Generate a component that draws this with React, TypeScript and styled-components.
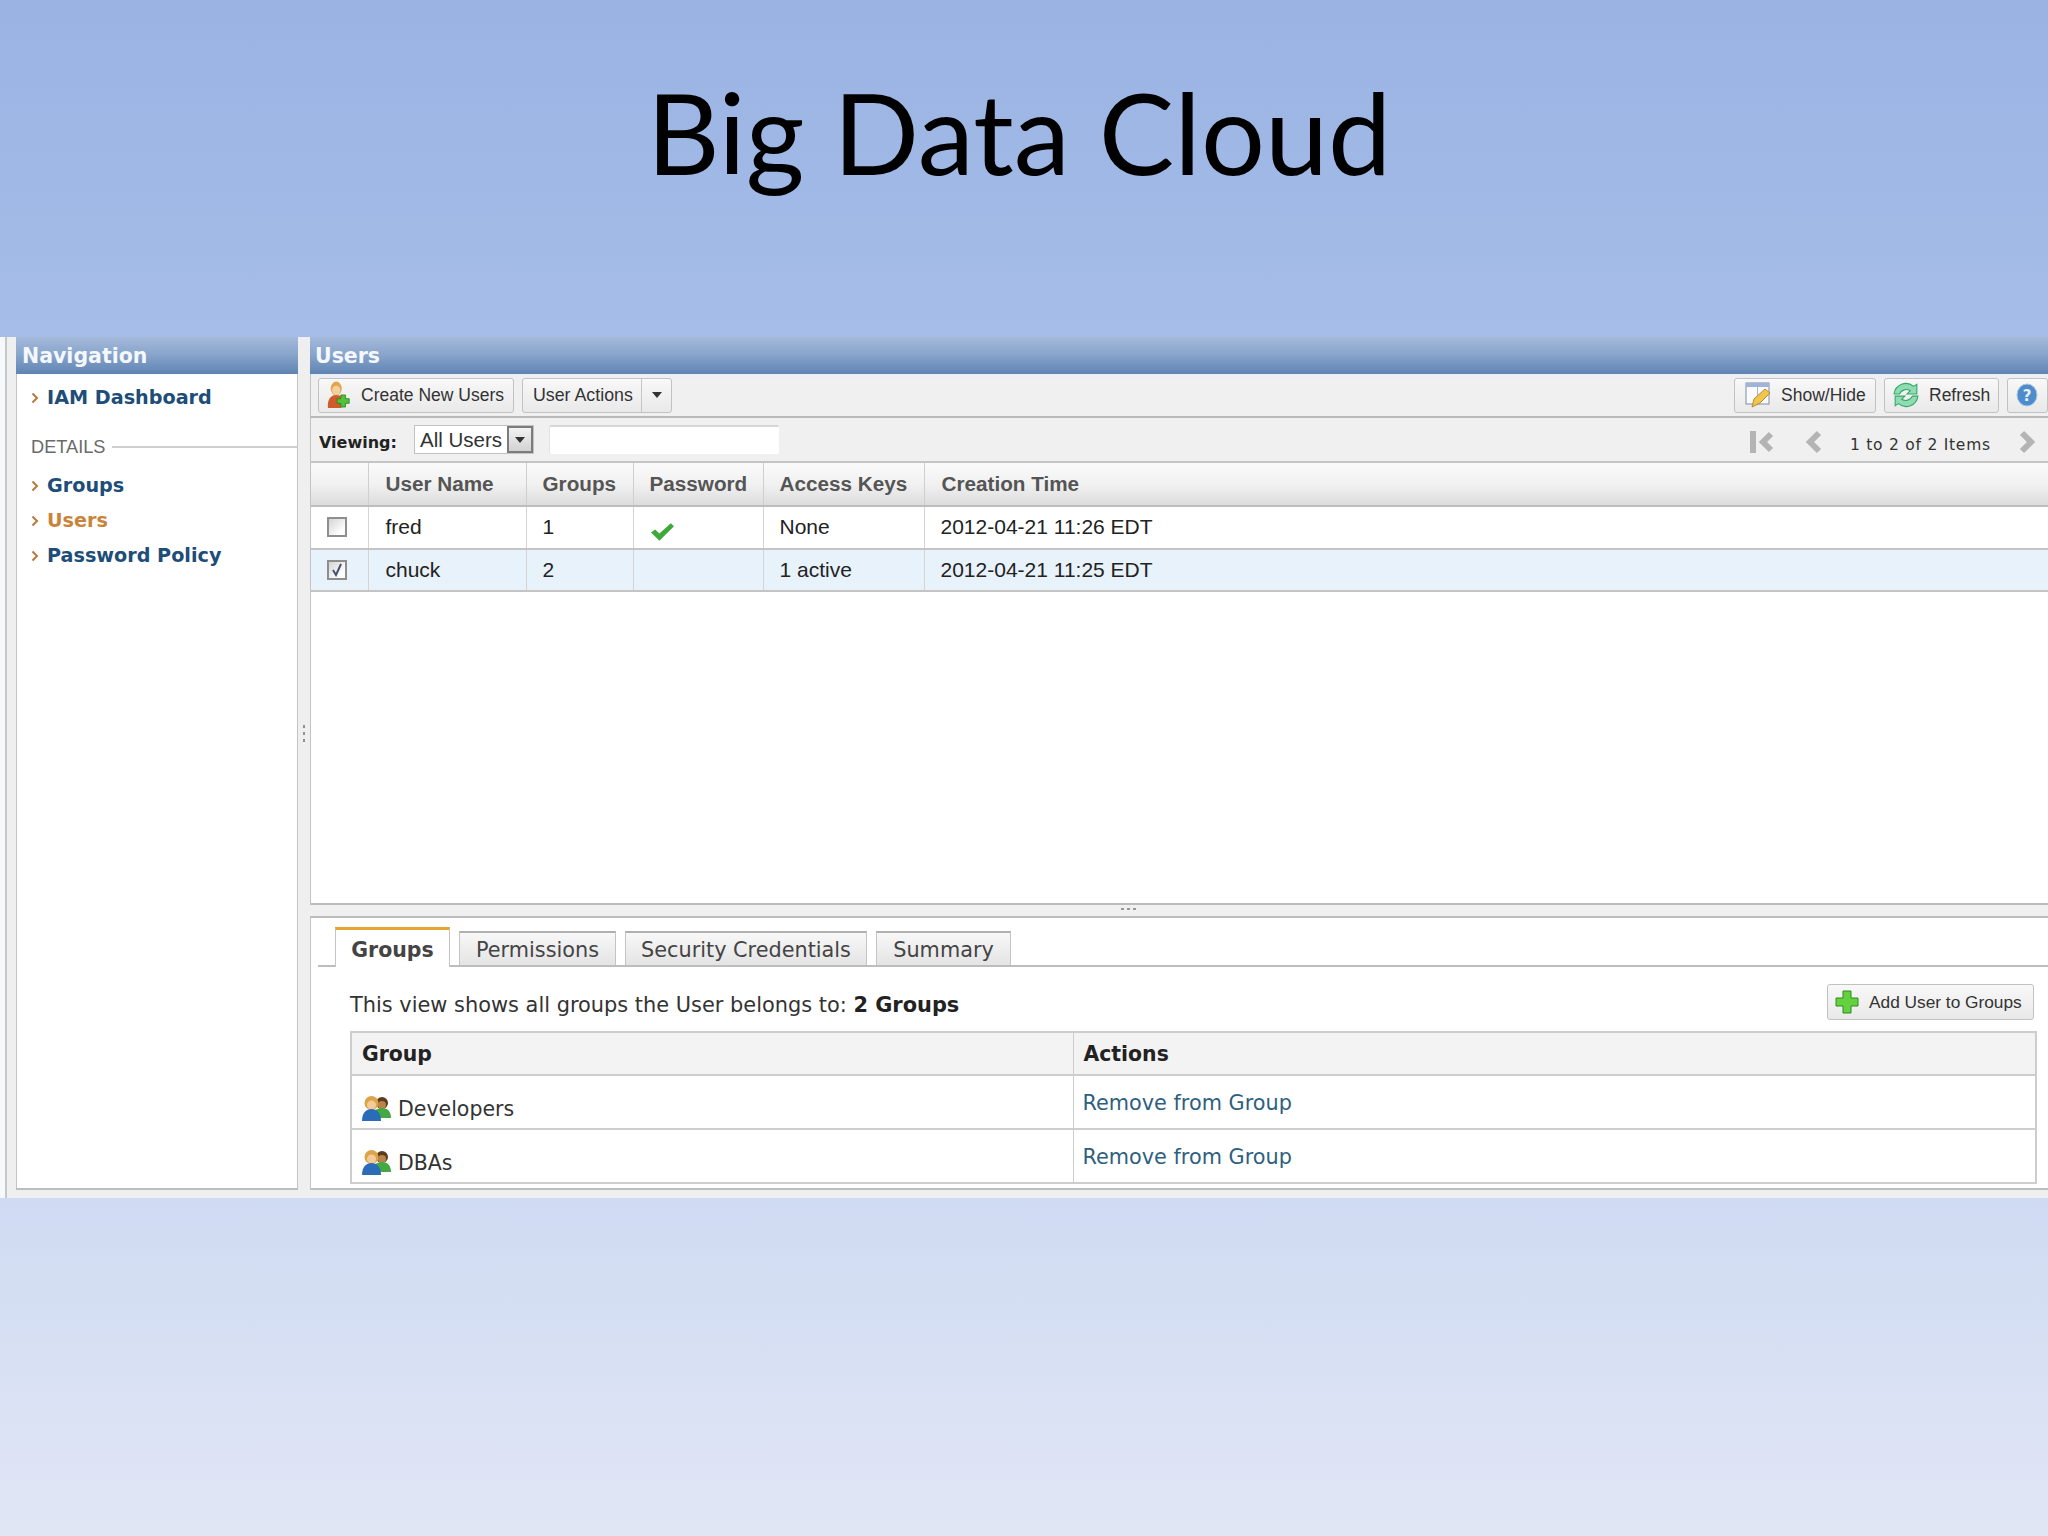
import React from "react";
import styled, { createGlobalStyle } from "styled-components";

const Global = createGlobalStyle`
  html, body { margin: 0; padding: 0; }
  body {
    width: 2048px;
    height: 1536px;
    overflow: hidden;
    background: linear-gradient(180deg, #9ab3e3 0px, #a6bde8 337px, #cfdbf2 1198px, #e1e6f5 1536px);
    font-family: "Liberation Sans", Arial, sans-serif;
  }
`;

const Page = styled.div`
  display: flex;
  flex-direction: column;
  width: 2048px;
  height: 1536px;
`;
const TitleBar = styled.header`
  height: 337px;
  flex: none;
  display: flex;
  justify-content: center;
`;
const Title = styled.h1`
  margin: 67px 0 0 -10px;
  font: 400 113px/128px Lato, "Open Sans", sans-serif;
  color: #000;
  letter-spacing: 0;
`;
const Shot = styled.div`
  height: 861px;
  flex: none;
  display: flex;
  box-sizing: border-box;
  padding-bottom: 8px;
  background: #efefef;
`;
const LeftEdge = styled.div`
  width: 16px;
  flex: none;
  margin-bottom: -8px;
  background: linear-gradient(90deg, #f7f8fc 5px, #c6c6cc 5px, #c6c6cc 7px, #efefef 7px);
`;
const Panel = styled.aside`
  width: 282px;
  flex: none;
  display: flex;
  flex-direction: column;
  background: #fff;
  border-bottom: 2px solid #bdbdbd;
`;
const PanelBody = styled.nav`
  flex: 1;
  border-left: 1px solid #c4c4c4;
  border-right: 1px solid #c4c4c4;
  padding: 0 0 0 14px;
`;
const HeaderBar = styled.div`
  height: 37px;
  flex: none;
  box-sizing: border-box;
  padding: 0 0 0 6px;
  display: flex;
  align-items: center;
  background: linear-gradient(180deg, #a3b9db 0%, #8aa6cc 45%, #5f84b3 100%);
  color: #f4f7fb;
  font: 700 20.5px "DejaVu Sans", Verdana, sans-serif;
`;
const MainHeader = styled(HeaderBar)`
  padding-left: 5px;
`;
const NavItem = styled.a<{ $active?: boolean }>`
  display: flex;
  align-items: center;
  gap: 8px;
  height: 35px;
  font: 700 19.2px "DejaVu Sans", Verdana, sans-serif;
  color: ${(p) => (p.$active ? "#c8853a" : "#1d4d78")};
`;
const TopNavItem = styled(NavItem)`
  margin: 6px 0 0 0;
`;
const SectionLabel = styled.div`
  display: flex;
  align-items: center;
  gap: 7px;
  margin: 20px 0 9px 0;
  height: 24px;
  font: 400 18.2px "Liberation Sans", Arial, sans-serif;
  color: #6a6a6a;
  &::after {
    content: "";
    flex: 1;
    height: 2px;
    background: #cfcfcf;
  }
`;
const Gutter = styled.div`
  width: 12px;
  flex: none;
  display: flex;
  flex-direction: column;
  align-items: center;
  justify-content: center;
  gap: 4px;
  padding-bottom: 60px;
`;
const GripDot = styled.i`
  width: 2px;
  height: 3px;
  background: #8f8f8f;
`;
const Main = styled.main`
  flex: 1;
  min-width: 0;
  display: flex;
  flex-direction: column;
`;
const Toolbar = styled.div`
  height: 44px;
  flex: none;
  box-sizing: border-box;
  display: flex;
  align-items: center;
  justify-content: space-between;
  padding: 0 0 0 7px;
  background: linear-gradient(180deg, #ebeef8 0, #f0f0f0 5px);
  border-bottom: 2px solid #b9b9b9;
  border-left: 1px solid #c4c4c4;
  overflow: hidden;
`;
const ToolGroup = styled.div`
  display: flex;
  gap: 8px;
  flex: none;
`;
const ToolButton = styled.button<{ $w: number; $pad?: number }>`
  width: ${(p) => p.$w}px;
  height: 35px;
  flex: none;
  box-sizing: border-box;
  display: flex;
  align-items: center;
  gap: 10px;
  padding: 0 0 0 ${(p) => p.$pad ?? 8}px;
  border: 1px solid #c2c2c2;
  border-radius: 3px;
  background: linear-gradient(180deg, #f8f8f8 0%, #e9e9e9 100%);
  font: 400 17.5px "Liberation Sans", Arial, sans-serif;
  color: #333;
  white-space: nowrap;
`;
const SplitButton = styled.div`
  width: 150px;
  height: 35px;
  box-sizing: border-box;
  display: flex;
  flex: none;
  border: 1px solid #c2c2c2;
  border-radius: 3px;
  background: linear-gradient(180deg, #f8f8f8 0%, #e9e9e9 100%);
  font: 400 17.8px "Liberation Sans", Arial, sans-serif;
  color: #333;
`;
const SplitLabel = styled.span`
  width: 119px;
  padding-left: 10px;
  box-sizing: border-box;
  display: flex;
  align-items: center;
  border-right: 1px solid #c6c6c6;
  white-space: nowrap;
`;
const SplitArrow = styled.span`
  flex: 1;
  display: flex;
  align-items: center;
  justify-content: center;
`;
const DownTri = styled.i`
  width: 0;
  height: 0;
  border-left: 5px solid transparent;
  border-right: 5px solid transparent;
  border-top: 6px solid #333;
`;
const FilterBar = styled.div`
  height: 45px;
  flex: none;
  box-sizing: border-box;
  display: flex;
  align-items: center;
  padding: 0 0 0 8px;
  background: #f0f0f0;
  border-bottom: 2px solid #c4c4c4;
  border-left: 1px solid #c4c4c4;
`;
const ViewingLabel = styled.label`
  width: 95px;
  padding-top: 5px;
  font: 700 16px "DejaVu Sans", Verdana, sans-serif;
  color: #222;
`;
const SelectBox = styled.div`
  width: 120px;
  height: 29px;
  box-sizing: border-box;
  display: flex;
  border: 1px solid #c2c2c2;
  background: #fff;
  font: 400 20.5px "Liberation Sans", Arial, sans-serif;
  color: #333;
`;
const SelectText = styled.span`
  flex: 1;
  padding-left: 5px;
  line-height: 28px;
`;
const SelectArrow = styled.span`
  width: 26px;
  display: flex;
  align-items: center;
  justify-content: center;
  border: 2px solid #7c7c7c;
  box-sizing: border-box;
  background: linear-gradient(180deg, #f2f2f2, #d2d2d2);
`;
const SearchInput = styled.div`
  width: 230px;
  height: 29px;
  margin-left: 15px;
  box-sizing: border-box;
  background: #fff;
  border-top: 2px solid #d6d6d6;
  border-left: 1px solid #e4e4e4;
  border-radius: 2px;
`;
const Pager = styled.div`
  margin-left: auto;
  display: flex;
  align-items: center;
  padding: 5px 12px 0 0;
`;
const PagerText = styled.span`
  width: 197px;
  padding: 6px 0 0 28px;
  box-sizing: border-box;
  font: 400 15.5px "DejaVu Sans", Verdana, sans-serif;
  letter-spacing: 0.75px;
  color: #333;
  white-space: nowrap;
`;
const PagerIconGap = styled.span`
  width: 31px;
`;
const GridArea = styled.div`
  flex: 1;
  min-height: 0;
  background: #fff;
  border-left: 1px solid #c4c4c4;
  border-bottom: 2px solid #bcbcbc;
`;
const Grid = styled.table`
  width: 100%;
  table-layout: fixed;
  border-collapse: collapse;
  font: 400 21px "Liberation Sans", Arial, sans-serif;
  color: #222;
`;
const GridHead = styled.th<{ $w?: number }>`
  ${(p) => (p.$w ? `width: ${p.$w}px;` : "")}
  height: 43px;
  box-sizing: border-box;
  padding: 0 0 0 16px;
  text-align: left;
  font: 700 20.7px "Liberation Sans", Arial, sans-serif;
  color: #555;
  background: linear-gradient(180deg, #fafafa 0%, #f1f1f1 50%, #dcdcdc 100%);
  border-right: 1px solid #cfcfcf;
  border-bottom: 2px solid #bdbdbd;
  &:nth-child(2) { padding-left: 17px; }
  &:last-child { border-right: none; padding-left: 17px; }
`;
const GridRow = styled.tr<{ $selected?: boolean }>`
  background: ${(p) => (p.$selected ? "#e8f2fb" : "#fff")};
`;
const GridCell = styled.td`
  height: 42.5px;
  box-sizing: border-box;
  padding: 0 0 0 16px;
  border-right: 1px solid #d4d4d4;
  border-bottom: 2px solid #c4c4c4;
  &:nth-child(2) { padding-left: 17px; }
  &:last-child { border-right: none; }
`;
const CheckCell = styled(GridCell)`
  padding-left: 16px;
`;
const CheckBox = styled.span<{ $checked?: boolean }>`
  display: flex;
  align-items: center;
  justify-content: center;
  width: 20px;
  height: 20px;
  box-sizing: border-box;
  border: 2px solid #8e8e8e;
  background: linear-gradient(135deg, #d4d4d4, #fdfdfd 75%);
`;
const CheckHolder = styled.span`
  display: block;
  height: 20px;
  margin: 9px 0 0 0;
`;
const Splitter = styled.div`
  height: 11px;
  flex: none;
  background: #f0f0f0;
  display: flex;
  justify-content: center;
  align-items: center;
  gap: 3px;
  padding: 0 102px 3px 0;
  box-sizing: border-box;
`;
const HGripDot = styled.i`
  width: 3px;
  height: 2px;
  background: #999;
`;
const Lower = styled.section`
  height: 274px;
  flex: none;
  box-sizing: border-box;
  display: flex;
  flex-direction: column;
  background: #fff;
  border-top: 2px solid #bcbcbc;
  border-left: 1px solid #c4c4c4;
  border-bottom: 2px solid #bdbdbd;
`;
const TabStrip = styled.div`
  height: 49px;
  flex: none;
  margin-left: 7px;
  padding-left: 17px;
  display: flex;
  align-items: flex-end;
  gap: 9px;
  box-sizing: border-box;
  border-bottom: 2px solid #bdbdbd;
`;
const Tab = styled.div<{ $w: number; $active?: boolean }>`
  width: ${(p) => p.$w}px;
  height: ${(p) => (p.$active ? 40 : 34)}px;
  box-sizing: border-box;
  margin-bottom: ${(p) => (p.$active ? -2 : 0)}px;
  display: flex;
  align-items: center;
  justify-content: center;
  padding-top: ${(p) => (p.$active ? 3 : 2)}px;
  font: ${(p) => (p.$active ? "700 20.5px" : "400 20.8px")} "DejaVu Sans", Verdana, sans-serif;
  color: #444;
  border: 1px solid #c4c4c4;
  border-bottom: none;
  border-top: ${(p) => (p.$active ? "3px solid #e5a331" : "2px solid #b0b0b0")};
  background: ${(p) => (p.$active ? "#fff" : "linear-gradient(180deg, #f8f8f8 0%, #e4e4e4 100%)")};
  white-space: nowrap;
`;
const InfoRow = styled.div`
  height: 64px;
  flex: none;
  box-sizing: border-box;
  padding: 6px 14px 0 39px;
  display: flex;
  align-items: center;
  justify-content: space-between;
`;
const InfoText = styled.p`
  margin: 0;
  padding-top: 6px;
  font: 400 20.9px "DejaVu Sans", Verdana, sans-serif;
  color: #333;
  b { color: #222; }
`;
const AddButton = styled(ToolButton)`
  height: 36px;
  gap: 10px;
  font-size: 17.3px;
`;
const GroupTable = styled.table`
  width: calc(100% - 50px);
  margin-left: 39px;
  table-layout: fixed;
  border-collapse: collapse;
  border: 2px solid #cdcdcd;
  font: 400 20.5px "DejaVu Sans", Verdana, sans-serif;
  color: #333;
`;
const GroupHead = styled.th<{ $w?: number }>`
  ${(p) => (p.$w ? `width: ${p.$w}px;` : "")}
  height: 43px;
  box-sizing: border-box;
  padding: 0 0 0 10px;
  text-align: left;
  background: #f3f3f3;
  font: 700 20.4px "DejaVu Sans", Verdana, sans-serif;
  color: #222;
  border-right: 1px solid #cdcdcd;
  border-bottom: 2px solid #cdcdcd;
`;
const GroupCell = styled.td`
  height: 54px;
  box-sizing: border-box;
  padding: 0 0 7px 10px;
  vertical-align: bottom;
  border-right: 1px solid #cdcdcd;
  border-bottom: 2px solid #cdcdcd;
`;
const GroupName = styled.span`
  display: flex;
  align-items: center;
  gap: 7px;
`;
const ActionCell = styled.td`
  padding: 1px 0 0 9px;
  border-bottom: 2px solid #cdcdcd;
  font-size: 20.8px;
`;
const ActionLink = styled.a`
  color: #2f5f80;
`;

const Chevron = () => (
  <svg width="8" height="12" viewBox="0 0 8 12">
    <path d="M1.5 1.5 6 6l-4.5 4.5" fill="none" stroke="#b9793a" strokeWidth="2" />
  </svg>
);
const UserAddIcon = () => (
  <svg width="24" height="28" viewBox="0 0 26 30">
    <ellipse cx="10" cy="8" rx="6" ry="7.5" fill="#e0a648" />
    <ellipse cx="10" cy="10" rx="4.5" ry="5" fill="#f4cfa0" />
    <path d="M1 29c-1-9 3-14 9-14 5 0 8 3 8 8l-3 6z" fill="#cf5a2a" />
    <path d="M15 15h5v4h4v5h-4v4h-5v-4h-4v-5h4z" fill="#55c23c" stroke="#2d8a22" />
  </svg>
);
const ShowHideIcon = () => (
  <svg width="26" height="26" viewBox="0 0 26 26">
    <rect x="1" y="1" width="23" height="21" fill="#fbfbff" stroke="#7d8aa6" />
    <rect x="1" y="1" width="23" height="4" fill="#9fb4d8" />
    <path d="M12.5 5v17" stroke="#aab4c8" />
    <path d="M7 25l2-8L20 7l5 4-10 10-8 4z" fill="#f0c64c" stroke="#b8892b" />
  </svg>
);
const RefreshIcon = () => (
  <svg width="26" height="26" viewBox="0 0 24 24">
    <path d="M1 11a11 11 0 0 1 18-7l3-2v9h-9l3-3a7 7 0 0 0-10 3z" fill="#8fdcb0" stroke="#36a66a" />
    <path d="M23 13a11 11 0 0 1-18 7l-3 2v-9h9l-3 3a7 7 0 0 0 10-3z" fill="#8fdcb0" stroke="#36a66a" />
  </svg>
);
const HelpIcon = () => (
  <svg width="22" height="24" viewBox="0 0 22 24">
    <ellipse cx="11" cy="12" rx="10" ry="11" fill="#4f8ccb" stroke="#a9c6e6" />
    <text x="11" y="18" fontFamily="DejaVu Sans" fontWeight="700" fontSize="15" fill="#e8f0fa" textAnchor="middle">?</text>
  </svg>
);
const CheckMark = () => (
  <svg width="25" height="20" viewBox="0 0 24 19">
    <path d="M1 10l4-3 4 4L20 1l3 3L9 18z" fill="#3ea83a" />
  </svg>
);
const Tick = () => (
  <svg width="12" height="14" viewBox="0 0 12 14">
    <path d="M2 7l3 5 5-11" fill="none" stroke="#47536b" strokeWidth="2" />
  </svg>
);
const FirstIcon = () => (
  <svg width="24" height="24" viewBox="0 0 24 24">
    <rect x="0" y="1" width="6" height="22" fill="#b4b4b4" />
    <path d="M21 4l-8 8 8 8" fill="none" stroke="#b4b4b4" strokeWidth="6" />
  </svg>
);
const PrevIcon = () => (
  <svg width="17" height="24" viewBox="0 0 17 24">
    <path d="M14 3l-9 9 9 9" fill="none" stroke="#b4b4b4" strokeWidth="6" />
  </svg>
);
const NextIcon = () => (
  <svg width="17" height="24" viewBox="0 0 17 24">
    <path d="M3 3l9 9-9 9" fill="none" stroke="#b4b4b4" strokeWidth="6" />
  </svg>
);
const PlusIcon = () => (
  <svg width="24" height="24" viewBox="0 0 24 24">
    <path d="M8 1h8v7h7v8h-7v7H8v-7H1V8h7z" fill="#63d23e" stroke="#2c8a1e" />
  </svg>
);
const GroupIcon = () => (
  <svg width="29" height="25" viewBox="0 0 29 25">
    <circle cx="20" cy="7" r="6" fill="#5a3d1b" />
    <circle cx="20" cy="9" r="4" fill="#b9844c" />
    <path d="M10 22c0-6 4-10 10-10s9 4 9 10z" fill="#45a842" />
    <circle cx="9.5" cy="7" r="7" fill="#dba448" />
    <circle cx="9.5" cy="9" r="4.5" fill="#f3cb9a" />
    <path d="M0 25c0-8 4-12 9.5-12S19 17 19 25z" fill="#2a6cb8" />
  </svg>
);

export default function App() {
  return (
    <Page>
      <Global />
      <TitleBar>
        <Title>Big Data Cloud</Title>
      </TitleBar>
      <Shot>
        <LeftEdge />
        <Panel>
          <HeaderBar>Navigation</HeaderBar>
          <PanelBody>
            <TopNavItem><Chevron />IAM Dashboard</TopNavItem>
            <SectionLabel>DETAILS</SectionLabel>
            <NavItem><Chevron />Groups</NavItem>
            <NavItem $active><Chevron />Users</NavItem>
            <NavItem><Chevron />Password Policy</NavItem>
          </PanelBody>
        </Panel>
        <Gutter><GripDot /><GripDot /><GripDot /></Gutter>
        <Main>
          <MainHeader>Users</MainHeader>
          <Toolbar>
            <ToolGroup>
              <ToolButton $w={196}><UserAddIcon />Create New Users</ToolButton>
              <SplitButton>
                <SplitLabel>User Actions</SplitLabel>
                <SplitArrow><DownTri /></SplitArrow>
              </SplitButton>
            </ToolGroup>
            <ToolGroup>
              <ToolButton $w={142} $pad={10}><ShowHideIcon />Show/Hide</ToolButton>
              <ToolButton $w={115}><RefreshIcon />Refresh</ToolButton>
              <ToolButton $w={41}><HelpIcon /></ToolButton>
            </ToolGroup>
          </Toolbar>
          <FilterBar>
            <ViewingLabel>Viewing:</ViewingLabel>
            <SelectBox>
              <SelectText>All Users</SelectText>
              <SelectArrow><DownTri /></SelectArrow>
            </SelectBox>
            <SearchInput />
            <Pager>
              <FirstIcon />
              <PagerIconGap />
              <PrevIcon />
              <PagerText>1 to 2 of 2 Items</PagerText>
              <NextIcon />
            </Pager>
          </FilterBar>
          <GridArea>
            <Grid>
              <thead>
                <tr>
                  <GridHead $w={57} />
                  <GridHead $w={158}>User Name</GridHead>
                  <GridHead $w={107}>Groups</GridHead>
                  <GridHead $w={130}>Password</GridHead>
                  <GridHead $w={161}>Access Keys</GridHead>
                  <GridHead>Creation Time</GridHead>
                </tr>
              </thead>
              <tbody>
                <GridRow>
                  <CheckCell><CheckBox /></CheckCell>
                  <GridCell>fred</GridCell>
                  <GridCell>1</GridCell>
                  <GridCell><CheckHolder><CheckMark /></CheckHolder></GridCell>
                  <GridCell>None</GridCell>
                  <GridCell>2012-04-21 11:26 EDT</GridCell>
                </GridRow>
                <GridRow $selected>
                  <CheckCell><CheckBox $checked><Tick /></CheckBox></CheckCell>
                  <GridCell>chuck</GridCell>
                  <GridCell>2</GridCell>
                  <GridCell />
                  <GridCell>1 active</GridCell>
                  <GridCell>2012-04-21 11:25 EDT</GridCell>
                </GridRow>
              </tbody>
            </Grid>
          </GridArea>
          <Splitter><HGripDot /><HGripDot /><HGripDot /></Splitter>
          <Lower>
            <TabStrip>
              <Tab $w={115} $active>Groups</Tab>
              <Tab $w={157}>Permissions</Tab>
              <Tab $w={242}>Security Credentials</Tab>
              <Tab $w={135}>Summary</Tab>
            </TabStrip>
            <InfoRow>
              <InfoText>This view shows all groups the User belongs to: <b>2 Groups</b></InfoText>
              <AddButton $w={207} $pad={7}><PlusIcon />Add User to Groups</AddButton>
            </InfoRow>
            <GroupTable>
              <thead>
                <tr>
                  <GroupHead $w={722}>Group</GroupHead>
                  <GroupHead>Actions</GroupHead>
                </tr>
              </thead>
              <tbody>
                <tr>
                  <GroupCell><GroupName><GroupIcon />Developers</GroupName></GroupCell>
                  <ActionCell><ActionLink>Remove from Group</ActionLink></ActionCell>
                </tr>
                <tr>
                  <GroupCell><GroupName><GroupIcon />DBAs</GroupName></GroupCell>
                  <ActionCell><ActionLink>Remove from Group</ActionLink></ActionCell>
                </tr>
              </tbody>
            </GroupTable>
          </Lower>
        </Main>
      </Shot>
    </Page>
  );
}
